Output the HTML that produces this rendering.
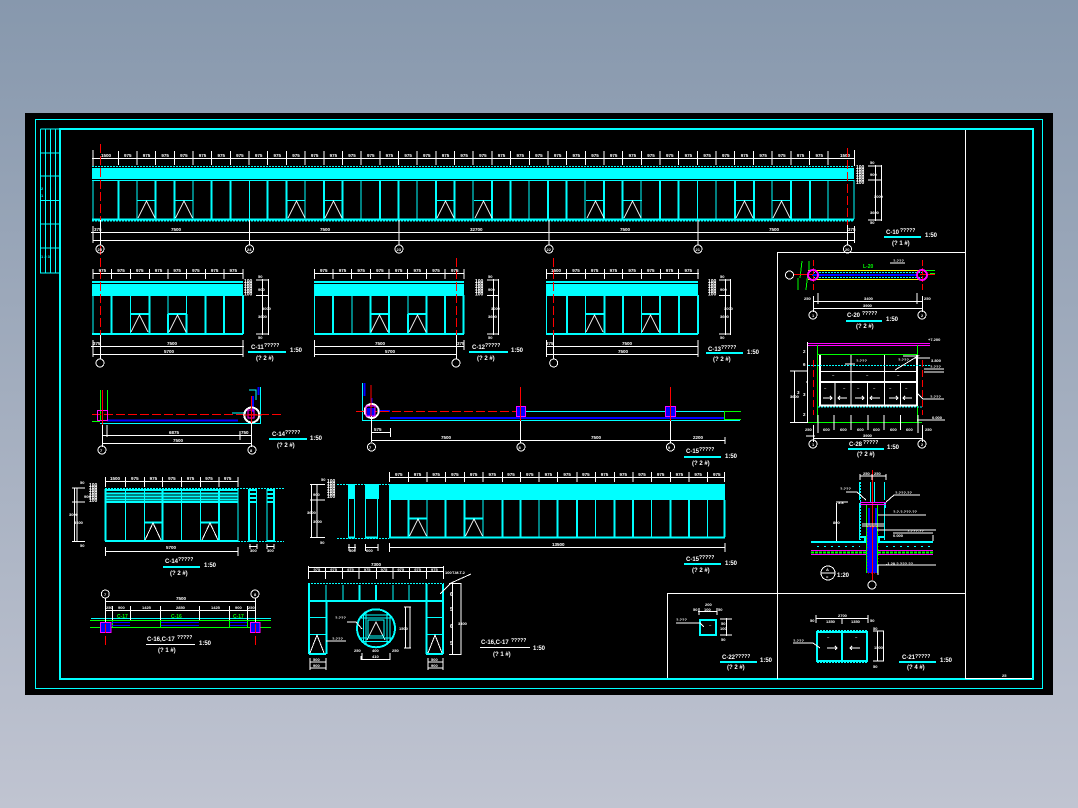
<!DOCTYPE html>
<html lang="en">
<head>
<meta charset="utf-8">
<title>CAD drawing</title>
<style>
html,body{margin:0;padding:0;width:1078px;height:808px;overflow:hidden;background:linear-gradient(180deg,#8798ad 0%,#c0c4d1 100%)}
svg{position:absolute;left:0;top:0;display:block}
text{font-family:"Liberation Sans",sans-serif;fill:#fff}
.d{font-size:4.5px;font-weight:700}
.s{font-size:4px;font-weight:700}
.c{font-size:6px;font-weight:700}
.q{font-size:5px;font-weight:700}
.g{fill:#0f0;font-size:5px;font-weight:700}
.b{font-size:5px;font-weight:700}
.w{stroke:#fff;stroke-width:1;fill:none}
.y{stroke:#0ff;stroke-width:1;fill:none}
.Y{stroke:#0ff;stroke-width:2;fill:none}
.r{stroke:#f00;stroke-width:1;fill:none;stroke-dasharray:9 3}
.n{stroke:#0f0;stroke-width:1;fill:none}
.m{stroke:#f0f;stroke-width:1;fill:none}
.u{stroke:#00f;stroke-width:2;fill:none}
.o{stroke:#ff0;stroke-width:1;fill:none}
.k{stroke:#fff;stroke-width:2;fill:none}
.dc{stroke:#0ff;stroke-width:1;fill:none;stroke-dasharray:2 1}
</style>
</head>
<body>
<svg width="1078" height="808" viewBox="0 0 1078 808" xmlns="http://www.w3.org/2000/svg" shape-rendering="crispEdges">
<rect x="25" y="113" width="1028" height="582" fill="#000"/>
<!-- frame -->
<rect x="35.5" y="119.5" width="1007" height="569" class="y"/>
<rect x="60" y="129" width="973" height="550" class="Y"/>
<path class="y" d="M40.5 129V273H60M45.5 129V273M50.5 129V273M55.5 129V273M40.5 129H60M40.5 153H60M40.5 176H60M40.5 200.500H60M40.5 224H60M40.5 248H60"/>
<path class="w" d="M965.500 130V679M778 252.500H965M777.500 252V679M668 593.500H965M667.500 593V678M965 678.500H1032"/>
<text class="s" x="41" y="190" style="fill:#0ff">2</text><text class="s" x="41" y="197" style="fill:#0ff">1</text>
<text class="s" x="41" y="258" style="fill:#0ff">1 2 3</text>
<text class="s" x="1002" y="677">25</text>

<!-- TOP ELEVATION C-10 -->
<rect x="92" y="168" width="762" height="11" fill="#0ff"/>
<path class="dc" d="M92 166.500H854"/>
<path class="y" d="M92 180.500H854M93 180V219M854 180V219M137 180V219M193 180V219M249.500 180V219M305 180V219M361 180V219M417 180V219M473 180V219M529 180V219M585 180V219M641 180V219M697.500 180V219M716 180V219M772 180V219M828 180V219"/>
<path class="Y" d="M118.300 180V219M155.700 180V219M174.300 180V219M211.700 180V219M230.400 180V219M267.700 180V219M286.400 180V219M323.800 180V219M342.500 180V219M379.800 180V219M398.500 180V219M435.900 180V219M454.500 180V219M491.900 180V219M510.600 180V219M547.900 180V219M566.600 180V219M604 180V219M622.700 180V219M660 180V219M678.700 180V219M735 180V219M754 180V219M791 180V219M810 180V219M92 219.500H854"/>
<path class="dc" d="M92 221H854"/>
<path class="y" d="M137 200.500H156M174.700 200.500H193M287 200.500H305.700M324 200.500H343M436 200.500H455M474 200.500H493M586 200.500H605M623 200.500H642M735 200.500H754M772 200.500H791"/>
<path class="w" d="M138 218L146.500 201L155 218M175.500 218L184 201L192.500 218M288 218L296.500 201L305 218M325 218L333.500 201L342 218M437 218L445.500 201L454 218M475 218L483.500 201L492 218M587 218L595.500 201L604 218M624 218L632.500 201L641 218M736 218L744.500 201L753 218M773 218L781.500 201L790 218"/>
<path class="w" d="M92 158.500H855M93 150V166M118.300 151V165M137 151V165M155.700 151V165M174.300 151V165M193 151V165M211.700 151V165M230.400 151V165M249 151V165M267.700 151V165M286.400 151V165M305.100 151V165M323.800 151V165M342.500 151V165M361.100 151V165M379.800 151V165M398.500 151V165M417.200 151V165M435.900 151V165M454.500 151V165M473.200 151V165M491.900 151V165M510.600 151V165M529.300 151V165M547.900 151V165M566.600 151V165M585.300 151V165M604 151V165M622.700 151V165M641.300 151V165M660 151V165M678.700 151V165M697.400 151V165M716.100 151V165M734.700 151V165M753.400 151V165M772.100 151V165M790.800 151V165M809.500 151V165M828.100 151V165M854.500 150V166"/>
<text class="d" x="101" y="157">1500</text>
<text class="d" x="124" y="157" style="word-spacing:9.93px">975 975 975 975 975 975 975 975 975 975 975 975 975 975 975 975 975 975 975 975 975 975 975 975 975 975 975 975 975 975 975 975 975 975 975 975 975 975</text>
<text class="d" x="840" y="157">1500</text>
<path class="w" d="M91 232.500H855M93 226V243M93 240.500H855M100.500 220V245M249.500 220V245M399 220V245M549 220V245M698 220V245M847.500 220V245M854.500 226V243"/>
<path class="r" d="M100.500 144V220M100.500 246V263M847.500 148V225"/>
<circle cx="100" cy="249" r="4" class="w"/><circle cx="249.500" cy="249" r="4" class="w"/><circle cx="399" cy="249" r="4" class="w"/><circle cx="549" cy="249" r="4" class="w"/><circle cx="698" cy="249" r="4" class="w"/><circle cx="847.500" cy="249" r="4" class="w"/>
<text class="s" x="97.500" y="251">25</text><text class="s" x="247" y="251">24</text><text class="s" x="396.500" y="251">23</text><text class="s" x="546.500" y="251">22</text><text class="s" x="695.500" y="251">21</text><text class="s" x="845" y="251">20</text>
<text class="d" x="94" y="231">375</text><text class="d" x="171" y="231">7500</text><text class="d" x="320" y="231">7500</text><text class="d" x="470" y="231">32700</text><text class="d" x="620" y="231">7500</text><text class="d" x="769" y="231">7500</text><text class="d" x="848" y="231">375</text>
<path class="w" d="M868 166H881M868 180H881M868 220H881M875.500 165V221M881.500 165V221"/>
<text class="b" x="856" y="169">100</text><text class="b" x="856" y="171.500">100</text><text class="b" x="856" y="174">100</text><text class="b" x="856" y="176.500">100</text><text class="b" x="856" y="179">100</text><text class="b" x="856" y="181.500">100</text><text class="b" x="856" y="184">100</text><text class="s" x="870" y="164">50</text><text class="s" x="870" y="176">900</text><text class="s" x="874" y="198">3000</text><text class="s" x="870" y="214">3600</text><text class="s" x="870" y="224">50</text>
<text class="c" x="886" y="234">C-10</text><text class="q" x="900" y="232">?????</text><text class="c" x="925" y="237">1:50</text><text class="c" x="892" y="245">(? 1 #)</text>
<path class="Y" d="M884 237H921"/>

<!-- C-11 -->
<rect x="92" y="284" width="151" height="12" fill="#0ff"/><rect x="92" y="281" width="151" height="2" fill="#0ff"/>
<path class="y" d="M93 295V334M130.300 295V334M168 295V314M186.700 295V314M130 314H149.300M168 314H186.700"/>
<path class="Y" d="M111.700 295V334M149.300 295V334M168 314V334M186.700 314V334M205.300 295V334M224 295V334M243 295V334M92 334H243M130.300 314H149.300M168 314H186.700"/>
<path class="w" d="M131 332L139.500 315L148 332M169 332L177.500 315L186 332M93 273.500H243M93 269V279M111.700 269V279M130.300 269V279M149.300 269V279M168 269V279M186.700 269V279M205.300 269V279M224 269V279M243 269V279M91 346.500H244M93 340V357M93 354.500H243M243 340V357M100.500 335V359"/>
<path class="r" d="M100.500 258V335"/><circle cx="100" cy="363" r="4" class="w"/>
<text class="d" x="98.600" y="272" style="word-spacing:9.95px">975 975 975 975 975 975 975 975</text><text class="d" x="93" y="345">375</text><text class="d" x="167" y="345">7500</text><text class="d" x="164" y="353">5700</text>
<path class="w" d="M256 280H269M256 295.500H269M256 334H269M262.500 279V335M268.500 279V335"/>
<text class="b" x="244" y="283">100</text><text class="b" x="244" y="285.500">100</text><text class="b" x="244" y="288">100</text><text class="b" x="244" y="290.500">100</text><text class="b" x="244" y="293">100</text><text class="b" x="244" y="295.500">100</text><text class="s" x="258" y="278">50</text><text class="s" x="258" y="291">900</text><text class="s" x="262" y="310">3000</text><text class="s" x="258" y="318">3600</text><text class="s" x="258" y="339">50</text>
<text class="c" x="251" y="349">C-11</text><text class="q" x="264" y="347">?????</text><text class="c" x="290" y="352">1:50</text><text class="c" x="256" y="360">(? 2 #)</text>
<path class="Y" d="M248 352H286"/>

<!-- C-12 -->
<rect x="314" y="284" width="150" height="12" fill="#0ff"/><rect x="314" y="281" width="150" height="2" fill="#0ff"/>
<path class="y" d="M314.500 295V334M352 295V334M408 295V314M426.500 295V314"/>
<path class="Y" d="M333 295V334M370.300 295V334M389 295V334M408 314V334M426.300 295V334M445 295V334M463.500 295V334M314 334H464M370.300 314H389M408 314H426.300"/>
<path class="w" d="M371 332L379.500 315L388 332M409 332L417.500 315L426 332M314 273.500H464M314.500 269V279M333 269V279M351.700 269V279M370.300 269V279M389 269V279M407.700 269V279M426.300 269V279M445 269V279M464 269V279M314 346.500H464M314.500 340V357M314 354.500H456M464 340V350M456.500 335V359"/>
<path class="r" d="M456.500 258V335"/><circle cx="456" cy="363" r="4" class="w"/>
<text class="d" x="320" y="272" style="word-spacing:9.95px">975 975 975 975 975 975 975 975</text><text class="d" x="375" y="345">7500</text><text class="d" x="385" y="353">5700</text><text class="d" x="457" y="345">375</text>
<path class="w" d="M487 280H499M487 295.500H499M487 334H499M493.500 279V335M498.500 279V335"/>
<text class="b" x="475" y="283">100</text><text class="b" x="475" y="285.500">100</text><text class="b" x="475" y="288">100</text><text class="b" x="475" y="290.500">100</text><text class="b" x="475" y="293">100</text><text class="b" x="475" y="295.500">100</text><text class="s" x="488" y="278">50</text><text class="s" x="488" y="291">900</text><text class="s" x="491" y="310">3000</text><text class="s" x="488" y="318">3600</text><text class="s" x="488" y="339">50</text>
<text class="c" x="472" y="349">C-12</text><text class="q" x="485" y="347">?????</text><text class="c" x="511" y="352">1:50</text><text class="c" x="477" y="360">(? 2 #)</text>
<path class="Y" d="M469 352H508"/>

<!-- C-13 -->
<rect x="546" y="284" width="152" height="12" fill="#0ff"/><rect x="546" y="281" width="152" height="2" fill="#0ff"/>
<path class="y" d="M546.500 295V334M585.300 295V334M641.300 295V334"/>
<path class="Y" d="M567 295V334M604.300 295V334M623 295V334M660 295V334M679 295V334M698 295V334M546 334H698M585.300 314H604.300M641.300 314H660"/>
<path class="w" d="M586 332L594.500 315L603 332M642 332L650.500 315L659 332M546 273.500H699M546.500 269V279M566.300 269V279M585.300 269V279M604.300 269V279M622.700 269V279M641.300 269V279M660.300 269V279M678.700 269V279M698 269V279M546 346.500H698M546.500 340V357M546 354.500H698M698 340V357M553.500 335V359"/>
<path class="r" d="M553.500 258V335"/><circle cx="553.700" cy="363" r="4" class="w"/>
<text class="d" x="551" y="272" style="word-spacing:9.95px">1500 975 975 975 975 975 975 975</text><text class="d" x="546" y="345">375</text><text class="d" x="622" y="345">7500</text><text class="d" x="618" y="353">7500</text>
<path class="w" d="M719 280H731M719 295.500H731M719 334H731M725.500 279V335M730.500 279V335"/>
<text class="b" x="708" y="283">100</text><text class="b" x="708" y="285.500">100</text><text class="b" x="708" y="288">100</text><text class="b" x="708" y="290.500">100</text><text class="b" x="708" y="293">100</text><text class="b" x="708" y="295.500">100</text><text class="s" x="720" y="278">50</text><text class="s" x="720" y="291">900</text><text class="s" x="724" y="310">3000</text><text class="s" x="720" y="318">3600</text><text class="s" x="720" y="339">50</text>
<text class="c" x="708" y="351">C-13</text><text class="q" x="721" y="349">?????</text><text class="c" x="747" y="354">1:50</text><text class="c" x="713" y="361">(? 2 #)</text>
<path class="Y" d="M706 353H743"/>

<!-- C-14 PLAN -->
<path class="n" d="M92 421.500H100M100.500 390V420M107.500 390V420"/>
<path class="r" d="M92 414.500H281"/>
<path class="u" d="M107 420.500H238M258.500 387V395M253 396V412"/>
<path class="y" d="M100 423.500H261M260.500 387V423M232 413H246M249 390H256V400"/>
<rect x="97.500" y="410.500" width="10" height="10" class="m"/>
<path d="M102.500 390V425" stroke="#f00" fill="none"/>
<circle cx="251.700" cy="415" r="7.500" class="k"/><rect x="248" y="410" width="6" height="8" class="m"/><path d="M244 415H262M251.500 396V423" stroke="#f00" fill="none"/>
<path class="w" d="M102 435.500H252M102 443.500H252M102.500 425V447M251.500 423V447M107 425V437M240 431V440"/><circle cx="102" cy="450" r="4" class="w"/><circle cx="252" cy="450" r="4" class="w"/>
<text class="s" x="100" y="452">7</text><text class="s" x="250" y="452">8</text>
<text class="d" x="169" y="434">6875</text><text class="d" x="173" y="442">7500</text><text class="d" x="241" y="434">750</text>
<text class="c" x="272" y="436">C-14</text><text class="q" x="285" y="434">?????</text><text class="c" x="310" y="440">1:50</text><text class="c" x="277" y="447">(? 2 #)</text>
<path class="Y" d="M269 439H307"/>

<!-- C-15 PLAN -->
<path class="y" d="M362.500 383V420.500H740M525 411.500H724M371 395V407"/>
<path class="u" d="M390 418H724M364.500 383V396M371.500 398V407M378 411H390"/>
<path d="M356 411.500H516" stroke="#f00" stroke-dasharray="9 3" fill="none"/>
<circle cx="371.700" cy="411" r="7" class="k"/><rect x="367" y="408" width="8" height="8" fill="#00f"/><rect x="366" y="406" width="9" height="10" class="m"/>
<rect x="516.500" y="406.500" width="9" height="10" fill="#00f" stroke="#f0f"/><rect x="665.500" y="406.500" width="10" height="10" fill="#00f" stroke="#f0f"/>
<path d="M520.500 387V421M670.500 387V421M371 385V416" stroke="#f00" fill="none"/>
<path class="w" d="M520.500 421V443M670.500 421V443M371.500 416V442M371 432.500H390M390.500 428V437M371 440.500H725M725 437V444"/>
<circle cx="521" cy="447" r="4" class="w"/><circle cx="670.500" cy="447" r="4" class="w"/><circle cx="371.500" cy="447" r="4" class="w"/>
<text class="s" x="518.500" y="449">8</text><text class="s" x="668" y="449">9</text><text class="s" x="369" y="449">7</text>
<text class="d" x="374" y="431">575</text><text class="d" x="441" y="439">7500</text><text class="d" x="591" y="439">7500</text><text class="d" x="693" y="439">2200</text>
<path class="n" d="M724 411.500H741M724 419.500H741M724.500 411V419"/>
<text class="c" x="686" y="453">C-15</text><text class="q" x="699" y="451">?????</text><text class="c" x="725" y="458">1:50</text><text class="c" x="692" y="465">(? 2 #)</text>
<path class="Y" d="M684 457H721"/>

<!-- C-14 ELEV -->
<path class="Y" d="M105 490H238M105 493.500H238M105 496.500H238M105 499.500H238M105 502H238M105.500 489V541M162.500 489V541M219 489V541M105 541H238M144.300 522.500H163M200.300 522.500H219"/>
<path class="y" d="M125.300 489V541M144.300 489V541M181.700 489V541M200.300 489V541M238 489V541M249 489V541M256.700 489V541M267 489V541M274 489V541"/>
<path class="Y" d="M249 490H257M249 494H257M249 498H257M249 502H257M267 490H274M267 494H274M267 498H274M267 502H274M249 539.500V541M249 541H257M267 541H274M249 489V541M274 489V541"/>
<path class="dc" d="M105 488.500H284M238 541.500H284"/>
<path class="w" d="M145 540L153 523L161 540M202 540L210 523L218 540M105 481.500H238M105.500 477V487M125.300 477V487M144.300 477V487M162.300 477V487M181.700 477V487M200.300 477V487M219 477V487M238 477V487M105 551.500H238M105.500 547V556M238 547V556M249 546.500H257M267 546.500H274M250 544V549M257 544V549M267 544V549M274 544V549M74.500 488V542M77 488V542M72 488H85M72 502H85M72 541.500H85"/>
<text class="d" x="110" y="480" style="word-spacing:9.8px">1500 975 975 975 975 975 975</text><text class="d" x="166" y="549">5700</text><text class="s" x="250" y="552">300</text><text class="s" x="267" y="552">300</text>
<text class="b" x="89" y="487">100</text><text class="b" x="89" y="489.500">100</text><text class="b" x="89" y="492">100</text><text class="b" x="89" y="494.500">100</text><text class="b" x="89" y="497">100</text><text class="b" x="89" y="499.500">100</text><text class="b" x="89" y="502">100</text><text class="s" x="80" y="484">50</text><text class="s" x="84" y="498">900</text><text class="s" x="69" y="516">3000</text><text class="s" x="74" y="524">3600</text><text class="s" x="80" y="547">50</text>
<text class="c" x="165" y="563">C-14</text><text class="q" x="178" y="561">?????</text><text class="c" x="204" y="567">1:50</text><text class="c" x="170" y="575">(? 2 #)</text>
<path class="Y" d="M163 567H200"/>

<!-- C-15 ELEV -->
<rect x="389" y="484" width="336" height="16" fill="#0ff"/><rect x="348" y="484" width="7" height="15" fill="#0ff"/><rect x="365" y="484" width="14" height="15" fill="#0ff"/>
<path class="y" d="M427 500V537M483 500V537M539 500V537M595.700 500V537M651.700 500V537M707.700 500V537M348.500 499V538M354.500 499V538M365.500 499V538M377.500 499V538"/>
<path class="Y" d="M390 500V537M408.700 500V537M445.700 500V537M464.300 500V537M502.300 500V537M520.300 500V537M557.700 500V537M577 500V537M614.300 500V537M633 500V537M670.300 500V537M689 500V537M724.500 500V537M389 537.500H725M348 537.500H355M365 537.500H378M408.700 518.500H427M464.300 518.500H483"/>
<path class="dc" d="M337 484.500H389M337 538.500H389"/>
<path class="w" d="M409.500 536L418 519L426.500 536M465.500 536L474 519L482.500 536M389 477.700H725M389.500 472V482M408.700 472V482M427 472V482M445.700 472V482M464.300 472V482M483 472V482M502.300 472V482M520.300 472V482M539 472V482M557.700 472V482M577 472V482M595.700 472V482M614.300 472V482M633 472V482M651.700 472V482M670.300 472V482M689 472V482M707.700 472V482M724.500 472V482M389 547.700H725M389.500 543V552M725 543V552M348 547.500H356M365 547.500H378M349 544V551M355 544V551M365.500 544V551M378 544V551M311.500 484V538M317 484V538M310 484.500H325M310 500H325M310 537.500H325"/>
<text class="d" x="395" y="476" style="word-spacing:9.95px">975 975 975 975 975 975 975 975 975 975 975 975 975 975 975 975 975 975</text><text class="d" x="552" y="546">13500</text><text class="s" x="349" y="552">300</text><text class="s" x="366" y="552">600</text>
<text class="b" x="327" y="483">100</text><text class="b" x="327" y="485.500">100</text><text class="b" x="327" y="488">100</text><text class="b" x="327" y="490.500">100</text><text class="b" x="327" y="493">100</text><text class="b" x="327" y="495.500">100</text><text class="b" x="327" y="498">100</text><text class="s" x="321" y="481">50</text><text class="s" x="313" y="496">900</text><text class="s" x="307" y="514">3600</text><text class="s" x="313" y="523">3000</text><text class="s" x="320" y="544">50</text>
<text class="c" x="686" y="561">C-15</text><text class="q" x="699" y="559">?????</text><text class="c" x="725" y="565">1:50</text><text class="c" x="692" y="572">(? 2 #)</text>
<path class="Y" d="M684 564H721"/>

<!-- C-16,17 PLAN -->
<path class="y" d="M91 618.500H271"/>
<path class="n" d="M90 620.500H271M90 627.500H271M112.300 620V627M160.500 620V627M229.500 620V627M247.500 620V627"/>
<path d="M112 622.500H130M112 625.500H130M161 622.500H199M161 625.500H199M230 622.500H247M230 625.500H247" stroke="#00f" fill="none"/>
<rect x="100.500" y="622.500" width="10.500" height="10" fill="#00f" stroke="#f0f"/><rect x="250.500" y="622.500" width="9.500" height="10" fill="#00f" stroke="#f0f"/>
<path d="M105.500 612V646M255.500 612V646" stroke="#f00" stroke-dasharray="9 3" fill="none"/>
<path class="w" d="M105 601.500H255M105 610.500H255M105.500 598V622M255.500 598V622M112.300 606V620M130.300 606V620M160.300 606V620M199.300 606V620M229.300 606V620M247.300 606V620"/>
<circle cx="105.300" cy="594" r="4" class="w"/><circle cx="255" cy="594" r="4" class="w"/>
<text class="s" x="104" y="596">7</text><text class="s" x="254" y="596">8</text>
<text class="d" x="176" y="600">7500</text><text class="s" x="106" y="609">250</text><text class="s" x="118" y="609">900</text><text class="s" x="142" y="609">1425</text><text class="s" x="176" y="609">2850</text><text class="s" x="211" y="609">1425</text><text class="s" x="235" y="609">900</text><text class="s" x="248" y="609">250</text>
<text class="g" x="117" y="618">C-17</text><text class="g" x="171" y="618">C-16</text><text class="g" x="233" y="618">C-17</text>
<text class="c" x="147" y="641">C-16,C-17</text><text class="q" x="177" y="639">?????</text><text class="c" x="199" y="645">1:50</text><text class="c" x="158" y="652">(? 1 #)</text>
<path class="w" d="M146 644.500H195"/>

<!-- GATE -->
<path class="dc" d="M308 583.500H444"/>
<path class="y" d="M326 585V600M343 585V600M359 585V600M393 585V600M409 585V600"/>
<path class="Y" d="M309 584V654M326.500 601V654M426.300 584V654M443 584V654M308 601H444M309 654H326M426 654H443M376 585V600M359.500 585V600"/>
<path class="y" d="M309 617.500H326M309 634.500H326M426 617.500H443M426 634.500H443"/>
<path class="w" d="M310 653L317 635L324 653M428 653L435 635L442 653M367 640L376 622L385 640"/>
<circle cx="376" cy="628.300" r="19" class="Y"/>
<path class="y" d="M363.500 615H390M363.500 641.500H390M363.500 615V642M390 615V642M366 612V644M387 612V644M360 618H393M360 638H393M368 620H384V636H368Z"/>
<path class="w" d="M308 567.500H444M308 571.500H444M308.500 566V579M325.700 568V579M342.300 568V579M359 568V579M376.300 568V579M393 568V579M409.700 568V579M426.300 568V579M443.500 566V579M452.500 583V655M461 583V655M449 583.500H461M449 654.500H461M404 607H411M405.500 607V648M410 607V648M404 648H411M361 656V660M362 659.500H390M362 653V660M390 653V660M347 622H356L362 629M310 662H326M310 668H326M310 658V670M326 658V670M428 662H443M428 668H443M428 658V670M443 658V670M326 641H346M440 594L451 583L471 574"/>
<text class="d" x="371" y="566">7300</text>
<text class="s" x="313.500" y="571" style="word-spacing:9px">975 975 975 975 975 975 975 975</text>
<text class="s" x="445" y="574">100</text><text class="s" x="452" y="574">T.M.T.2</text>
<text class="b" x="450" y="596">6</text><text class="b" x="450" y="611">5</text><text class="b" x="450" y="628">6</text><text class="b" x="450" y="645">5</text><text class="s" x="458" y="625">3300</text>
<text class="s" x="399" y="630">1500</text>
<text class="s" x="335" y="619">?.???</text><text class="s" x="332" y="640">?.???</text>
<text class="s" x="354" y="652">250</text><text class="s" x="372" y="652">400</text><text class="s" x="392" y="652">250</text><text class="s" x="372" y="658">410</text>
<text class="s" x="313" y="661">500</text><text class="s" x="313" y="667">900</text><text class="s" x="431" y="661">500</text><text class="s" x="431" y="667">900</text>
<text class="c" x="481" y="644">C-16,C-17</text><text class="q" x="511" y="642">?????</text><text class="c" x="533" y="650">1:50</text><text class="c" x="493" y="656">(? 1 #)</text>
<path class="w" d="M480 647.700H530"/>

<!-- C-20 -->
<path class="n" d="M802 261L800 278M798 278L798 290M809 261V272M808 272L806 290M923 270.500H935M930 273.500H935"/>
<path class="o" d="M808 270.500H920M808 279.500H920"/>
<path class="u" d="M812 275H918"/>
<path class="dc" d="M813 272.500H922M813 277.500H922"/>
<path d="M794 274.500H813M920 274.500H935" stroke="#f00" fill="none"/>
<path d="M813.500 260V290M922.500 260V290" stroke="#f00" stroke-dasharray="6 2" fill="none"/>
<circle cx="813" cy="275" r="5" class="m" style="stroke-width:2"/><circle cx="922" cy="275" r="5" class="m" style="stroke-width:2"/><circle cx="789.500" cy="275" r="4" class="w"/>
<text class="g" x="863" y="268">L-20</text><text class="s" x="893" y="262">?.???</text><path class="w" d="M890 263H905"/>
<path class="w" d="M813 301.500H922M813 308.500H922M813.500 296V312M922.500 296V312M818 293V304M917 293V304"/><circle cx="813" cy="315" r="4" class="w"/><circle cx="922" cy="315" r="4" class="w"/>
<text class="s" x="804" y="300">250</text><text class="s" x="864" y="300">3400</text><text class="s" x="924" y="300">250</text><text class="s" x="863" y="307">3900</text><text class="s" x="812" y="317">1</text><text class="s" x="921" y="317">2</text>
<text class="c" x="847" y="317">C-20</text><text class="q" x="862" y="315">?????</text><text class="c" x="886" y="321">1:50</text><text class="c" x="856" y="328">(? 2 #)</text>
<path class="Y" d="M846 321H882"/>

<!-- C-28 SECTION -->
<path class="m" d="M808 343.500H930M808 345.500H930"/>
<path class="n" d="M817.500 345V422M917.500 345V422M792 422.500H922M817 354.500H918"/>
<path class="k" d="M820 355V406M917 355V406M819 382H917M819 405.500H917"/>
<path class="w" d="M851 355V381M884.500 355V381M819 371.500H917M835 383V405M851 383V405M867.700 383V405M884.300 383V405M900.700 383V405"/>
<path class="dc" d="M808 365.500H930M818 407H922"/>
<path d="M813.500 360V415M922.500 360V415" stroke="#f00" stroke-dasharray="7 3" stroke-width="1" fill="none"/>
<path class="w" d="M823 398H832M830 396L832 398L830 400M847 398H838M840 396L838 398L840 400M855 398H864M862 396L864 398L862 400M880 398H870M872 396L870 398L872 400M889 398H898M896 396L898 398L896 400M912 398H903M905 396L903 398L905 400"/>
<path class="w" d="M807.500 342V422M794.500 371V423M790 371H808M806 382H808M790 422.500H808M818 415V433M834 415V430M851 415V430M868 415V430M884 415V430M900.500 415V430M918 415V433M813.500 425V442M922.500 425V442M813 438.500H922M806 436H815M914 358H930M924 369H944M924 372H944M918 394L923 399H944M917 420H945M845 364H855M903 356H918L895 370"/>
<circle cx="813" cy="444" r="4" class="w"/><circle cx="922" cy="444" r="4" class="w"/>
<text class="s" x="812" y="446">1</text><text class="s" x="921" y="446">2</text>
<text class="d" x="803" y="353">2</text><text class="d" x="803" y="366">6</text><text class="d" x="803" y="396">3</text><text class="d" x="803" y="416">2</text><text class="d" x="797" y="394">3</text><text class="s" x="790" y="398">3600</text>
<text class="s" x="928" y="341">+7.200</text><text class="s" x="931" y="362">3.800</text><text class="s" x="930" y="368">?.???</text><text class="s" x="930" y="398">?.???</text><text class="s" x="932" y="419">0.000</text>
<text class="s" x="856" y="362">?.???</text><text class="s" x="898" y="361">?.???</text>
<text class="s" x="805" y="431">250</text><text class="s" x="823" y="431">600</text><text class="s" x="840" y="431">600</text><text class="s" x="857" y="431">600</text><text class="s" x="873" y="431">600</text><text class="s" x="890" y="431">600</text><text class="s" x="906" y="431">600</text><text class="s" x="925" y="431">250</text><text class="s" x="863" y="437">3900</text>
<text class="s" x="832" y="377">~</text><text class="s" x="866" y="377">~</text><text class="s" x="897" y="377">~</text><text class="s" x="824" y="390">~</text><text class="s" x="843" y="390">~</text><text class="s" x="857" y="390">~</text><text class="s" x="873" y="390">~</text><text class="s" x="889" y="390">~</text><text class="s" x="905" y="390">~</text>
<text class="c" x="849" y="446">C-28</text><text class="q" x="863" y="444">?????</text><text class="c" x="887" y="449">1:50</text><text class="c" x="857" y="456">(? 2 #)</text>
<path class="Y" d="M848 449H884"/>

<!-- DETAIL A -->
<rect x="867" y="527" width="11" height="46" fill="#00f"/>
<rect x="867" y="527" width="11" height="46" fill="none" stroke="#f00" stroke-dasharray="1 2"/>
<path class="n" d="M866.500 505V573M877.500 505V573"/>
<path class="y" d="M859.500 482V500M884.500 482V500M859.500 505V540M884.500 505V540M870.500 482V503M874.500 482V503"/>
<path class="dc" d="M860.500 482V540"/>
<path class="Y" d="M811 542H866M878 542H933M860 503V508M885 503V508M859 537H865V541M879 541V537H885"/>
<path class="u" d="M869 508V525M876 508V525"/>
<path d="M872.500 470V580" stroke="#f00" fill="none"/>
<path class="m" d="M860 502.500H886M860 504.500H886M811 550.500H866M811 554.500H866M878 550.500H933M878 554.500H933"/>
<path d="M811 552.500H866M878 552.500H933" stroke="#0f0" stroke-width="2" stroke-dasharray="3 1" fill="none"/>
<path d="M817 546.500H860M886 546.500H930" stroke="#0ff" stroke-dasharray="2 5" fill="none"/>
<path class="w" d="M860 476H886M860 474V480M872 474V480M886 474V480M866 500L857 492H846M886 502L894 495H920M878 515H926M836 502H848M836.500 503V541M871 526H878M877 530H936M893 533H933M933 535V541M878 575V565H936M862 524H884M862 526H884"/>
<circle cx="828" cy="573" r="7" class="w"/><path class="w" d="M821 573H835"/><circle cx="872" cy="585" r="4" class="w"/>
<text class="s" x="826" y="571">A</text><text class="s" x="826" y="578">=</text><text class="c" x="837" y="577">1:20</text>
<text class="s" x="863" y="475">250</text><text class="s" x="874" y="475">250</text><text class="s" x="840" y="490">?.???</text><text class="s" x="895" y="494">?.???.??</text><text class="s" x="893" y="513">?.?.?.???.??</text><text class="s" x="907" y="532">?.???.??</text><text class="s" x="893" y="537">0.000</text><text class="s" x="886" y="565">-1.20 ?.???.??</text><text class="s" x="838" y="504">3.8</text><text class="s" x="833" y="524">800</text>

<!-- C-22 -->
<rect x="700" y="620" width="16" height="15" class="Y"/>
<path class="w" d="M698 611.500H717M699 608V615M717 608V615M676 623H700L704 627M720 619H732M720 635H732M726.500 618V636"/>
<text class="s" x="705" y="606">200</text><text class="s" x="704" y="611">100</text><text class="s" x="693" y="611">50</text><text class="s" x="718" y="611">50</text><text class="s" x="676" y="621">?.???</text><text class="s" x="721" y="625">50</text><text class="s" x="720" y="630">100</text><text class="s" x="721" y="641">50</text><text class="s" x="709" y="627">~</text>
<text class="c" x="722" y="659">C-22</text><text class="q" x="735" y="658">?????</text><text class="c" x="760" y="662">1:50</text><text class="c" x="727" y="669">(? 2 #)</text>
<path class="Y" d="M720 662H757"/>

<!-- C-21 -->
<rect x="817" y="632" width="50" height="29" class="Y"/>
<path class="Y" d="M842 632V661"/>
<path class="dc" d="M817 630.500H868M817 662.500H868"/>
<path class="w" d="M827 648H837M835 646L837 648L835 650M860 648H850M852 646L850 648L852 650M793 643H813L820 648M816 618.500H868M816 615V623M842 618V624M868 615V623M873 631H884M873 661H884M877.500 631V661M883.500 631V661"/>
<text class="s" x="838" y="617">2700</text><text class="s" x="826" y="623">1350</text><text class="s" x="851" y="623">1350</text><text class="s" x="810" y="622">50</text><text class="s" x="870" y="622">50</text><text class="s" x="873" y="630">50</text><text class="s" x="873" y="668">50</text><text class="s" x="874" y="649">1500</text><text class="s" x="827" y="639">~</text><text class="s" x="855" y="639">~</text><text class="s" x="793" y="642">?.???</text>
<text class="c" x="902" y="659">C-21</text><text class="q" x="915" y="658">?????</text><text class="c" x="940" y="662">1:50</text><text class="c" x="907" y="669">(? 4 #)</text>
<path class="Y" d="M899 662H936"/>
</svg>
</body>
</html>
